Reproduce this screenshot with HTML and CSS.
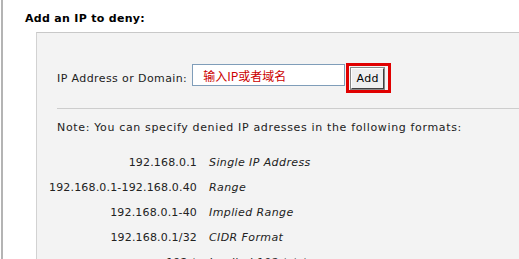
FILE: index.html
```html
<!DOCTYPE html>
<html lang="en">
<head>
    <meta charset="UTF-8">
    <title>Deny IP</title>
    <link rel="stylesheet" href="styles.css">
</head>
<body>
    <div class="wrap">
        <h3 class="title">Add an IP to deny:</h3>
        <div class="panel">
            <div class="add-row">
                <label class="label" for="ip">IP Address or Domain:</label>
                <input class="ip-input" id="ip" type="text" value="输入IP或者域名">
                <span class="mark">
                    <button class="btn" type="button">Add</button>
                </span>
            </div>
            <div class="line"></div>
            <p class="note">Note: You can specify denied IP adresses in the following formats:</p>
            <div class="formats">
                <span class="ip">192.168.0.1</span><span class="desc">Single IP Address</span>
                <span class="ip">192.168.0.1-192.168.0.40</span><span class="desc">Range</span>
                <span class="ip">192.168.0.1-40</span><span class="desc">Implied Range</span>
                <span class="ip">192.168.0.1/32</span><span class="desc">CIDR Format</span>
                <span class="ip">192.*</span><span class="desc">Implied 192.*.*.*</span>
            </div>
        </div>
    </div>
</body>
</html>
```

FILE: styles.css
```css
*{
    margin: 0px;
    padding: 0px;
    box-sizing: border-box;
}

html, body{
    background: #fff;
    overflow: hidden;
    height: 100%;
}

body{
    font-family: "DejaVu Sans", Verdana, sans-serif;
    font-size: 11px;
    letter-spacing: 0.4px;
    color: #222;
}

.wrap{
    margin-left: 1px;
    border-left: 2px solid #b4b4b4;
    min-height: 100%;
}

.title{
    font-size: 11px;
    font-weight: bold;
    letter-spacing: 0.3px;
    color: #000;
    line-height: 16px;
    padding: 11px 0 0 22px;
    margin-bottom: 5px;
}

.panel{
    margin-left: 33px;
    background: #f3f3f3;
    border-top: 1px solid #c8c8c8;
    border-left: 1px solid #d2d2d2;
    padding: 30px 0 0 20px;
    min-height: 300px;
}

.add-row{
    display: flex;
    align-items: center;
}

.label{
    margin-right: 5px;
}

.ip-input{
    width: 153px;
    height: 22px;
    border: 1px solid #7f9db9;
    background: #fff;
    padding-left: 10px;
    font-family: "Noto Sans CJK SC", sans-serif;
    font-size: 12px;
    letter-spacing: 0;
    color: #c00;
    margin-right: 1px;
    margin-bottom: 6px;
    outline: none;
}

.mark{
    display: flex;
    border: 3px solid #e00000;
    padding: 2px 4px 1px 2px;
}

.btn{
    width: 33px;
    height: 21px;
    font-family: "DejaVu Sans", Verdana, sans-serif;
    font-size: 11px;
    letter-spacing: 0.4px;
    color: #000;
    background: #efefef;
    border: 1px solid;
    border-color: #fff #404040 #404040 #fff;
    box-shadow: 0 0 0 1px #888;
}

.line{
    height: 1px;
    background: #cdcdcd;
    margin-top: 15px;
}

.note{
    line-height: 25px;
    margin-top: 6px;
    letter-spacing: 0.65px;
}

.formats{
    display: grid;
    grid-template-columns: 148px auto;
    column-gap: 12px;
    line-height: 25px;
    margin: 10px 0 0 -8px;
}

.formats .ip{
    text-align: right;
    letter-spacing: 0.17px;
}

.formats .desc{
    font-style: italic;
}
```
